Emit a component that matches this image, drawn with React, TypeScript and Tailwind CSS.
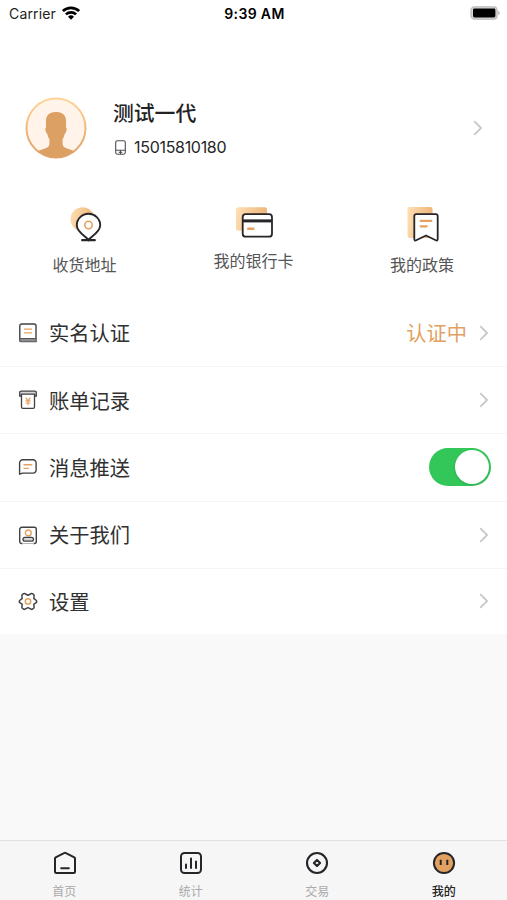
import React from "react";

const INK = "#26262a";
const ORANGE = "#e4a262";

function WifiIcon() {
  return (
    <svg className="mb-[2px] ml-[6px] h-[14px] w-[18px]" viewBox="0 0 18 14" fill="none" stroke="#000" strokeWidth="2.7">
      <path d="M0.9 5.1a11.6 11.6 0 0 1 16.2 0" />
      <path d="M3.9 8.4a7.3 7.3 0 0 1 10.2 0" />
      <path d="M9 13.8 6 10.7a4.3 4.3 0 0 1 6 0Z" fill="#000" stroke="none" />
    </svg>
  );
}

function BatteryIcon() {
  return (
    <svg className="mb-[1px] h-[14px] w-[30px]" viewBox="0 0 30 14">
      <rect x="1" y="0.9" width="26" height="12.2" rx="3.4" fill="#d9d9d9" stroke="#b9b9b9" strokeWidth="1.3" />
      <rect x="3" y="2.5" width="22.4" height="9" rx="1.4" fill="#000" />
      <path d="M28.3 4.8c1.8.7 1.8 3.7 0 4.4Z" fill="#aaa" />
    </svg>
  );
}

function Avatar() {
  return (
    <svg className="h-[62px] w-[62px] shrink-0" viewBox="0 0 62 62">
      <defs>
        <linearGradient id="ring" x1="0" y1="0" x2="0" y2="1">
          <stop offset="0" stopColor="#ffd597" />
          <stop offset="1" stopColor="#dda064" />
        </linearGradient>
        <clipPath id="disc">
          <circle cx="31" cy="31" r="30" />
        </clipPath>
      </defs>
      <circle cx="31" cy="31" r="29.8" fill="#fff3ea" />
      <g clipPath="url(#disc)" fill="#dda064">
        <path d="M31 15c-6.600-.3-10 3.200-10 9v6.600c-.9.200-.8 1.700-.4 3.200.4 1.600.7 2.700 1.700 2.900.5 2.300 1.100 4.100 2.100 5.600v4.600c0 2.600-2.200 3.700-5.300 4.800-4.100 1.400-7.100 2.300-9.700 4.300V64h43.200v-8c-2.600-2-5.600-2.900-9.700-4.300-3.100-1.100-5.300-2.200-5.300-4.800v-4.600c1-1.500 1.600-3.300 2.100-5.600 1-.2 1.300-1.300 1.700-2.900.4-1.500.5-3-.4-3.200V24c0-5.800-3.400-9.300-10-9Z" />
      </g>
      <circle cx="31" cy="31" r="29.5" fill="none" stroke="url(#ring)" strokeWidth="2" />
    </svg>
  );
}

function PhoneIcon() {
  return (
    <svg className="h-[15px] w-[11px]" viewBox="0 0 11 15" fill="none" stroke="#4c4c54" strokeWidth="1.1">
      <rect x="0.7" y="0.7" width="9.6" height="13.5" rx="1.6" />
      <path d="M0.7 10.300h9.600M5.500 10.300v4" />
      <path d="M3.700 12.300h3.600" />
    </svg>
  );
}

function Chevron({ className }: { className: string }) {
  return (
    <svg className={className} viewBox="0 0 10 16" fill="none" stroke="#c8c8ca" strokeWidth="1.8">
      <path d="m1.200 1.200 6.900 6.800-6.900 6.800" />
    </svg>
  );
}

function PeachFade({ id }: { id: string }) {
  return (
    <linearGradient id={id} x1="0" y1="0" x2="1" y2="0.2">
      <stop offset="0" stopColor="#ffe0b5" />
      <stop offset="1" stopColor="#edb477" />
    </linearGradient>
  );
}

function AddressIcon() {
  return (
    <svg className="h-[36px] w-[36px]" viewBox="68 206 36 36" fill="none">
      <defs><PeachFade id="pinFade" /></defs>
      <circle cx="82.500" cy="219.300" r="12" fill="url(#pinFade)" />
      <path d="M88.500 239.800c-1.600-3-11.700-7.200-11.700-14.600a11.700 11.500 0 0 1 23.400 0c0 7.400-10.100 11.600-11.700 14.600Z" fill="#fff" stroke={INK} strokeWidth="1.9" />
      <path d="M82.200 240.200h12.600" stroke={INK} strokeWidth="2.2" strokeLinecap="round" />
      <circle cx="88.500" cy="225" r="3.700" stroke={ORANGE} strokeWidth="1.6" />
    </svg>
  );
}

function CardIcon() {
  return (
    <svg className="h-[32px] w-[40px]" viewBox="234 206 40 32" fill="none">
      <defs><PeachFade id="cardFade" /></defs>
      <rect x="236" y="207.300" width="31" height="23.500" rx="2.5" fill="url(#cardFade)" />
      <rect x="242.700" y="214.200" width="29.300" height="22.500" rx="3" fill="#fff" stroke={INK} strokeWidth="1.8" />
      <path d="M243 220.900h29" stroke={INK} strokeWidth="3" />
      <path d="M248.200 228.700h5.200" stroke={ORANGE} strokeWidth="2.5" strokeLinecap="round" />
    </svg>
  );
}

function PolicyIcon() {
  return (
    <svg className="h-[38px] w-[34px]" viewBox="406 205 34 38" fill="none">
      <defs><PeachFade id="policyFade" /></defs>
      <path d="M409 207h21.500a2 2 0 0 1 2 2v29H410a2.500 2.500 0 0 1-2.500-2.500v-27a1.500 1.500 0 0 1 1.500-1.500Z" fill="url(#policyFade)" />
      <path d="M414.300 216.200a2 2 0 0 1 2-2h19.400a2 2 0 0 1 2 2v22.800c0 1.500-.8 1.900-1.900 1.200l-9.800-4.700-9.800 4.700c-1.100.7-1.900.3-1.900-1.200Z" fill="#fff" stroke={INK} strokeWidth="1.8" strokeLinejoin="round" />
      <path d="M420.700 220.900h10.600M420.700 226.300h6" stroke={ORANGE} strokeWidth="2.3" strokeLinecap="round" />
    </svg>
  );
}

const rowIcon = "h-[20px] w-[20px] shrink-0";

function BookIcon() {
  return (
    <svg className={rowIcon} viewBox="0 0 20 20" fill="none">
      <path d="M1.800 17V2.800A1.800 1.800 0 0 1 3.600 1h12.600A1.800 1.800 0 0 1 18 2.800V15.500" stroke="#414145" strokeWidth="1.4" />
      <path d="M3.200 15.500h15v3.300h-15a1.650 1.650 0 0 1 0-3.300Z" fill="#8c8c8e" stroke="#55555a" strokeWidth="1.1" />
      <path d="M6 6.200h8M6 9.900h8" stroke={ORANGE} strokeWidth="1.3" />
    </svg>
  );
}

function BillIcon() {
  return (
    <svg className={rowIcon} viewBox="0 0 20 20" fill="none" stroke="#414145" strokeWidth="1.3">
      <path d="M3.500 6H1.700V2.500A1.300 1.300 0 0 1 3 1.200h14a1.300 1.300 0 0 1 1.300 1.300V6h-1.800" fill="#d7d7d8" />
      <path d="M3.500 4.200h13v12.800a1.300 1.300 0 0 1-1.300 1.300H4.800a1.300 1.300 0 0 1-1.300-1.300Z" fill="#fff" />
      <path d="m7.600 7.600 2.400 3 2.400-3M7.500 10.900h5M7.500 13h5M10 10.700v4.500" stroke={ORANGE} strokeWidth="1.2" />
    </svg>
  );
}

function MessageIcon() {
  return (
    <svg className={rowIcon} viewBox="0 0 20 20" fill="none">
      <path d="M1.600 17.200V5.800a3 3 0 0 1 3-3h10.500a3 3 0 0 1 3 3v7.300a3 3 0 0 1-3 3H4.700Z" stroke="#414145" strokeWidth="1.4" strokeLinejoin="round" />
      <path d="M5.500 7.700h8.800M5.500 11.400h5.300" stroke={ORANGE} strokeWidth="1.4" />
    </svg>
  );
}

function AboutIcon() {
  return (
    <svg className={rowIcon} viewBox="0 0 20 20" fill="none">
      <path d="M4.500 18.500H3.700a2 2 0 0 1-2-2V4.300a2 2 0 0 1 2-2h12.600a2 2 0 0 1 2 2v12.200a2 2 0 0 1-2 2h-.8" stroke="#414145" strokeWidth="1.4" />
      <circle cx="10.300" cy="7.900" r="2.900" stroke={ORANGE} strokeWidth="1.4" />
      <rect x="5" y="12.300" width="10.500" height="3.800" rx="1.9" fill="#d6d6d7" stroke="#414145" strokeWidth="1.3" />
      <path d="M4 18.500h12" stroke="#b4b4b6" strokeWidth="1" />
    </svg>
  );
}

function GearIcon() {
  return (
    <svg className={rowIcon} viewBox="0 0 20 20" fill="none">
      <path d="m7.900 3.200 2.100 1 2.100-1c.7-.8 1.500-1 2.300-.5l1.100.7c.7.5.8 1.100.5 1.900l-.1 2.300 1.800 1.200c.8.500 1 .9 1 1.600s-.2 1.100-1 1.600l-1.800 1.200.1 2.300c.3.800.2 1.400-.5 1.900l-1.100.7c-.8.5-1.600.3-2.300-.5l-2.100-1-2.100 1c-.7.8-1.500 1-2.300.5l-1.100-.7c-.7-.5-.8-1.100-.5-1.900l.1-2.300-1.800-1.200c-.8-.5-1-.9-1-1.600s.2-1.100 1-1.600l1.800-1.200L4 5.300c-.3-.8-.2-1.400.5-1.900l1.100-.7c.8-.5 1.600-.3 2.300.5Z" stroke="#414145" strokeWidth="1.5" strokeLinejoin="round" />
      <circle cx="10" cy="10.400" r="2.700" stroke={ORANGE} strokeWidth="1.5" />
    </svg>
  );
}

function Toggle() {
  return (
    <span className="flex h-[38px] w-[62px] items-center justify-end rounded-full bg-[#33c75a] pr-[2px]">
      <span className="h-[34px] w-[34px] rounded-full bg-white shadow-[0_1px_3px_rgba(0,0,0,0.15)]" />
    </span>
  );
}

const tabIcon = "h-[24px] w-[24px]";

function HomeIcon() {
  return (
    <svg className={`${tabIcon} ml-[1px]`} viewBox="0 0 24 24" fill="none" stroke={INK} strokeWidth="2" strokeLinejoin="round" strokeLinecap="round">
      <path d="M2 7.600c0-.6.200-.9.700-1.200L11 2.100c.7-.4 1.300-.4 2 0l8.300 4.300c.5.300.7.600.7 1.200v12.900a1.500 1.500 0 0 1-1.500 1.500h-17A1.500 1.500 0 0 1 2 20.500Z" />
      <path d="M8.200 17.200h7.600" />
    </svg>
  );
}

function StatsIcon() {
  return (
    <svg className={tabIcon} viewBox="0 0 24 24" fill="none" stroke={INK} strokeWidth="2" strokeLinecap="round">
      <rect x="2" y="2" width="20" height="20" rx="3.5" />
      <path d="M7 13.500V17M12 7.500V17M17 10.500V17" />
    </svg>
  );
}

function TradeIcon() {
  return (
    <svg className={tabIcon} viewBox="0 0 24 24" fill="none" stroke={INK} strokeWidth="2.1">
      <circle cx="12" cy="12" r="10" />
      <path d="m12 8.900 3.100 3.100-3.100 3.100L8.900 12Z" strokeLinejoin="round" />
    </svg>
  );
}

function MineIcon() {
  return (
    <svg className={tabIcon} viewBox="0 0 24 24" fill="none" stroke={INK} strokeWidth="2">
      <circle cx="12" cy="12" r="10.100" fill="#e2a160" />
      <path d="M8.700 8.700v5.300M15.300 8.700v5.300" />
    </svg>
  );
}

const rows = [
  { label: "实名认证", icon: <BookIcon />, note: "认证中" },
  { label: "账单记录", icon: <BillIcon /> },
  { label: "消息推送", icon: <MessageIcon />, toggle: true },
  { label: "关于我们", icon: <AboutIcon /> },
  { label: "设置", icon: <GearIcon /> },
];

const tabs = [
  { label: "首页", icon: <HomeIcon /> },
  { label: "统计", icon: <StatsIcon /> },
  { label: "交易", icon: <TradeIcon /> },
  { label: "我的", icon: <MineIcon />, active: true },
];

export default function App() {
  return (
    <div className="flex h-[900px] w-[507px] flex-col overflow-hidden bg-[#f9f9f9] font-['Inter','Noto_Sans_CJK_SC',sans-serif] text-[#333]">
      <div className="bg-white">
        <header className="grid h-[27px] grid-cols-3 items-center pr-[7px] pl-[9px] text-[14px]">
          <div className="flex items-center text-[#222]">
            <span className="tracking-[0.15px]">Carrier</span>
            <WifiIcon />
          </div>
          <span className="text-center font-semibold tracking-[0.35px] text-black">9:39 AM</span>
          <span className="flex justify-end"><BatteryIcon /></span>
        </header>

        <section className="mt-[70px] flex h-[62px] items-center pr-[24px] pl-[25px]">
          <Avatar />
          <div className="ml-[26px] flex-1">
            <h1 className="pt-[4px] text-[20.8px] leading-[32px] font-medium text-[#222]">测试一代</h1>
            <p className="mt-[2px] flex h-[30px] items-center gap-[8px] pl-[2px] text-[16px] text-[#262626]">
              <PhoneIcon />
              <span className="tracking-[-0.3px]">15015810180</span>
            </p>
          </div>
          <Chevron className="h-[16px] w-[10px]" />
        </section>

        <nav className="mt-[46px] grid h-[95px] grid-cols-3 text-[16px] leading-[24px] text-[#555]">
          <div className="flex flex-col items-center">
            <span className="mt-[1px] ml-[2px]"><AddressIcon /></span>
            <span className="mt-[11px]">收货地址</span>
          </div>
          <div className="flex flex-col items-center">
            <span className="mt-[1px] ml-[1px]"><CardIcon /></span>
            <span className="mt-[11px]">我的银行卡</span>
          </div>
          <div className="flex flex-col items-center">
            <span className="ml-[1px]"><PolicyIcon /></span>
            <span className="mt-[10px] mr-[1px]">我的政策</span>
          </div>
        </nav>

        <ul>
          {rows.map((row) => (
            <li key={row.label} className="flex h-[67.2px] items-center border-b border-[#f5f5f5] pr-[16px] pl-[18px] text-[20.3px] text-[#303030] last:h-[65px] last:border-b-0">
              {row.icon}
              <span className="ml-[11px] flex-1 pt-[3px]">{row.label}</span>
              {row.note && <span className="mr-[12px] pt-[3px] text-[#e2a164]">{row.note}</span>}
              {row.toggle ? <Toggle /> : <Chevron className="mr-[2px] h-[16px] w-[10px]" />}
            </li>
          ))}
        </ul>
      </div>

      <footer className="mt-auto grid h-[60px] grid-cols-4 border-t-[1.5px] border-[#e1e1e1] bg-[#f6f6f6] pl-[1px]">
        {tabs.map((tab) => (
          <div key={tab.label} className="flex flex-col items-center pt-[10px]">
            {tab.icon}
            <span className={tab.active ? "mt-[8px] text-[12px] leading-[18px] font-medium text-[#222]" : "mt-[8px] text-[12px] leading-[18px] text-[#aaa]"}>
              {tab.label}
            </span>
          </div>
        ))}
      </footer>
    </div>
  );
}
